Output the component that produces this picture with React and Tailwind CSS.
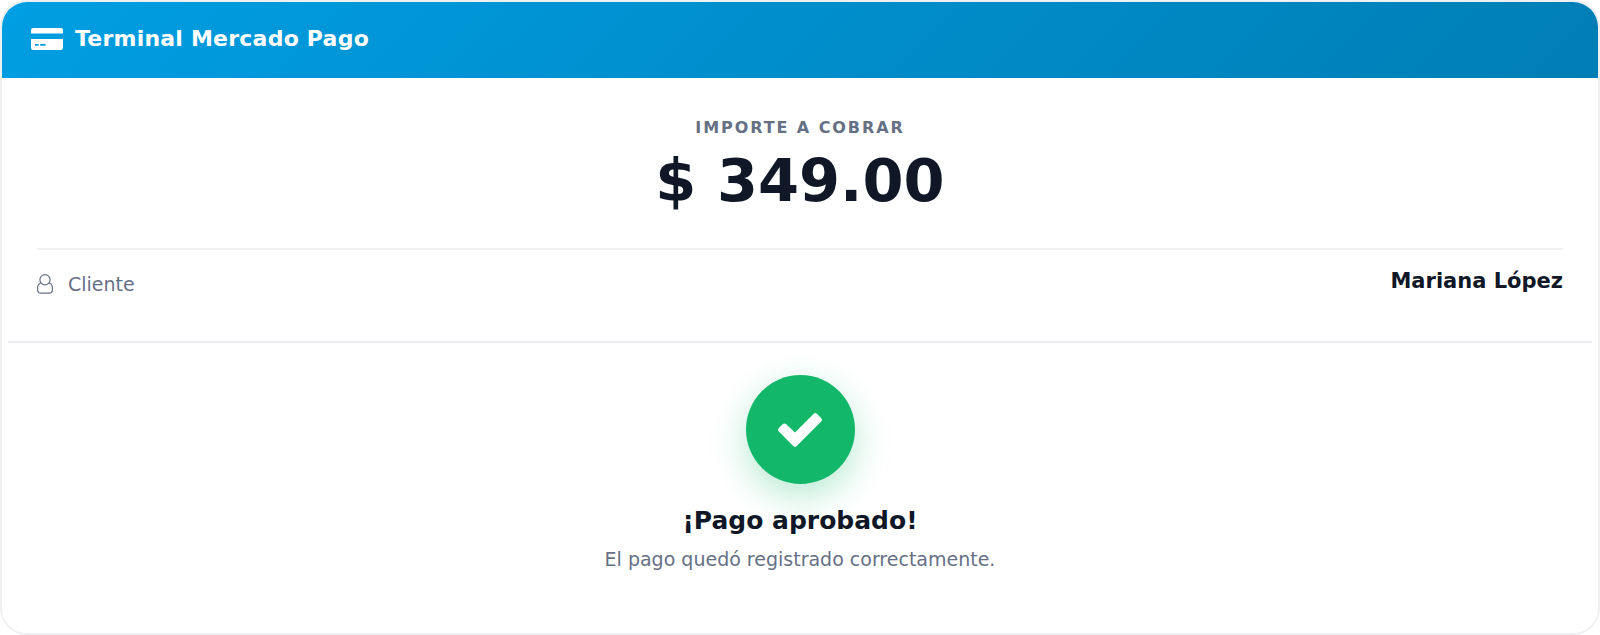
import React from 'react';

const CardIcon = () => (
  <svg className="w-8 h-[22px] shrink-0" viewBox="0 0 32 22" fill="currentColor" aria-hidden="true">
    <path d="M2.2 0h27.6A2.2 2.2 0 0 1 32 2.2v3.3H0V2.2A2.2 2.2 0 0 1 2.2 0z" />
    <path
      fillRule="evenodd"
      d="M0 11h32v8.8a2.2 2.2 0 0 1-2.2 2.200H2.200A2.200 2.200 0 0 1 0 19.800V11zM4 16v1.800h3.600v-1.800zM9.200 16v1.800h5.300v-1.800z"
    />
  </svg>
);

const UserIcon = () => (
  <svg className="w-4 h-5 shrink-0" viewBox="0 0 16 20" fill="none" stroke="currentColor" strokeWidth="1.2" aria-hidden="true">
    <circle cx="8" cy="5.8" r="5.1" />
    <path d="M3.800 9C1.700 9.700.6 11.700.6 14v1.800c0 2 1.300 3.400 3.200 3.400h8.400c1.900 0 3.200-1.400 3.200-3.400V14c0-2.300-1.100-4.300-3.200-5" />
  </svg>
);

const CheckIcon = () => (
  <svg className="w-11 h-[34px]" viewBox="0 0 44 34" fill="currentColor" aria-hidden="true">
    <path d="M15.200 32.900.9 18.600a2.600 2.600 0 0 1 0-3.600l3.700-3.700a2.600 2.600 0 0 1 3.600 0l8.800 8.200L35.500.9a2.600 2.600 0 0 1 3.600 0l4 4a2.600 2.600 0 0 1 0 3.600L18.800 32.900a2.600 2.600 0 0 1-3.600 0z" />
  </svg>
);

const TerminalHeader = ({ title }) => (
  <header className="flex items-center gap-3 h-[76px] px-[29px] pb-[3px] bg-linear-135 from-[#009ee3] to-[#007eb5] text-white">
    <CardIcon />
    <h1 className="text-[22px] leading-7 font-bold tracking-[0.01em]">{title}</h1>
  </header>
);

const PaymentSummary = ({ amount, customer }) => (
  <section className="mx-[6px] px-[29px] pt-[38px] pb-[43px] border-b-2 border-[#eaecf0]">
    <div className="pb-8 text-center border-b-2 border-[#f0f1f3]">
      <p className="text-[16px] leading-6 font-bold tracking-[0.12em] text-[#667085]">IMPORTE A COBRAR</p>
      <p className="mt-1.5 text-[59px] leading-[70px] font-bold">{amount}</p>
    </div>
    <dl className="flex items-start justify-between pt-4">
      <dt className="flex items-center gap-[15px] pt-1 text-[19px] leading-7 text-[#667085]">
        <UserIcon />
        Cliente
      </dt>
      <dd className="text-[21px] leading-[30px] font-bold">{customer}</dd>
    </dl>
  </section>
);

const PaymentResult = ({ title, message }) => (
  <section className="flex flex-col items-center px-7 pt-8 pb-15 text-center" role="status">
    <div className="flex items-center justify-center size-[109px] rounded-full bg-[#12b76a] text-white shadow-[0_12px_36px_rgba(18,183,106,0.3)]">
      <CheckIcon />
    </div>
    <h2 className="mt-[21px] text-[25px] leading-8 font-bold">{title}</h2>
    <p className="mt-2 text-[19px] leading-7 text-[#667085]">{message}</p>
  </section>
);

const App = () => {
  return (
    <main className="overflow-hidden bg-white border-2 border-[#eef0f2] rounded-[27px] font-['DejaVu_Sans',sans-serif] text-[#101828]">
      <TerminalHeader title="Terminal Mercado Pago" />
      <PaymentSummary amount="$ 349.00" customer="Mariana López" />
      <PaymentResult title="¡Pago aprobado!" message="El pago quedó registrado correctamente." />
    </main>
  );
};

export default App;
